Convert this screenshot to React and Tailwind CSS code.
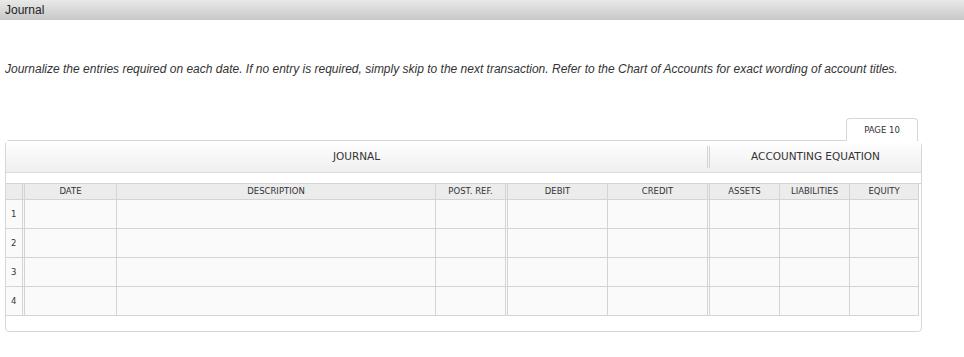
const cols = ['', 'DATE', 'DESCRIPTION', 'POST. REF.', 'DEBIT', 'CREDIT', 'ASSETS', 'LIABILITIES', 'EQUITY'];

// border style per column: double lines after #, post ref and credit
const colBorder = (i) =>
    i === 0 || i === 3 || i === 5
        ? 'border-r-[3px] border-double border-r-[#d4d4d4]'
        : 'border-r border-r-[#d4d4d4]';

export default function App() {
    const rows = [1, 2, 3, 4];

    return (
        <div className="min-h-[357px] w-[964px] bg-white font-['Liberation_Sans',Arial,sans-serif] text-[#333]">
            <div className="flex h-[20px] items-center bg-gradient-to-b from-[#e9e9e9] to-[#c8c8c8] px-[5px] text-[12px] text-[#222]">
                Journal
            </div>

            <p className="mt-[42px] px-[5px] text-[12px] italic leading-[14px] text-[#333]">
                Journalize the entries required on each date. If no entry is required, simply skip to the next transaction. Refer to the Chart of Accounts for exact wording of account titles.
            </p>

            <div className="ml-[5px] mt-[42px] w-[917px] font-['DejaVu_Sans',Verdana,sans-serif]">
                <div className="flex justify-end pr-[4px]">
                    <div className="relative z-10 -mb-px flex h-[23px] w-[72px] items-center justify-center rounded-t-[4px] border border-b-0 border-[#d6d6d6] bg-white text-[8.5px] text-[#333]">
                        PAGE 10
                    </div>
                </div>

                <div className="rounded-[4px] rounded-tr-[6px] border border-[#d6d6d6] bg-white pb-[15px]">
                    <div className="flex h-[32px] items-center border-b border-[#dcdcdc] bg-gradient-to-b from-white to-[#efefef] text-[10.5px] text-[#333]">
                        <div className="flex-1 text-center">JOURNAL</div>
                        <div className="h-[22px] w-[3px] border-x border-[#d4d4d4]" />
                        <div className="w-[211px] text-center">ACCOUNTING EQUATION</div>
                    </div>

                    <div className="mt-[10px] grid grid-cols-[19px_92px_319px_72px_100px_102px_70px_70px_69px] border-t border-[#d4d4d4] text-[8.5px] text-[#333]">
                        {cols.map((c, i) => (
                            <div
                                key={c || 'n'}
                                className={`flex h-[16px] items-center justify-center border-b border-b-[#d4d4d4] bg-[#ececec] ${colBorder(i)}`}
                            >
                                {c}
                            </div>
                        ))}
                        {rows.map((r) =>
                            cols.map((c, i) => (
                                <div
                                    key={`${r}-${i}`}
                                    className={`flex h-[29px] items-center border-b border-b-[#d4d4d4] bg-[#fafafa] ${colBorder(i)} ${i === 0 ? 'pl-[5px]' : ''}`}
                                >
                                    {i === 0 ? r : ''}
                                </div>
                            )),
                        )}
                    </div>
                </div>
            </div>
        </div>
    );
}
